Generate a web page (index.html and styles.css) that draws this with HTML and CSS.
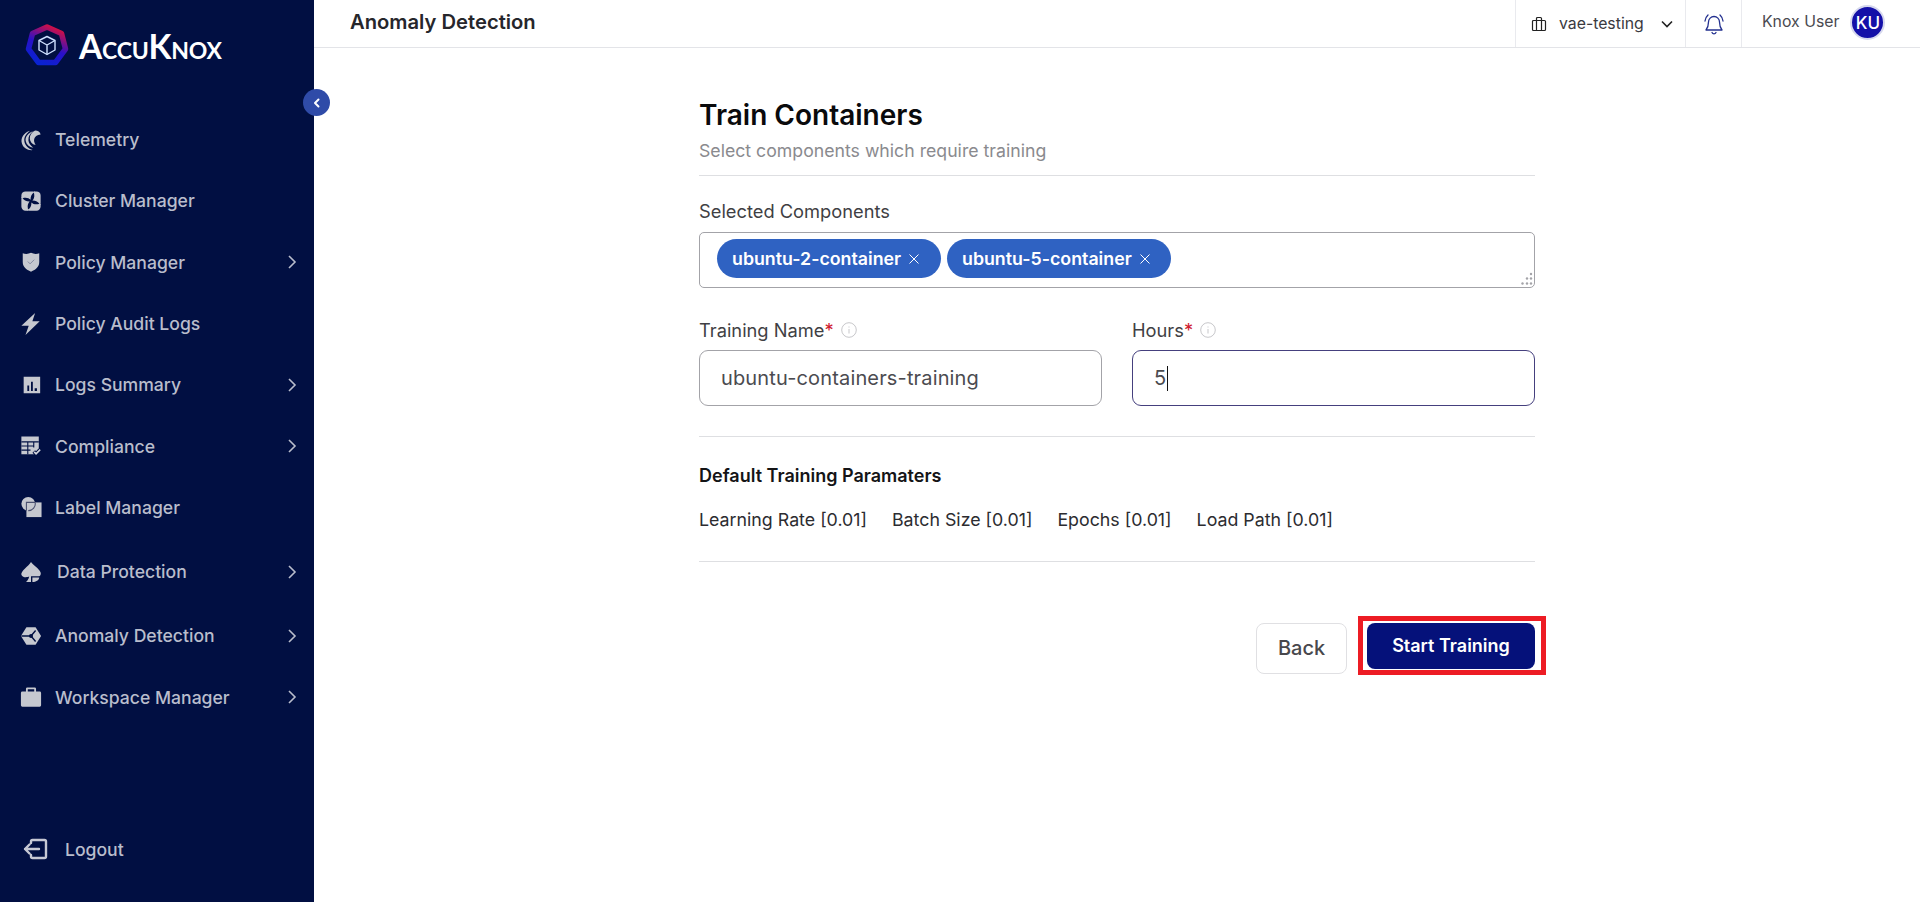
FILE: index.html
```html
<!DOCTYPE html>
<html lang="en">
<head>
  <meta charset="UTF-8">
  <meta name="viewport" content="width=device-width, initial-scale=1.0">
  <title>Anomaly Detection</title>
  <link rel="stylesheet" href="styles.css">
</head>
<body>

  <aside class="sidebar">
    <div class="brand">
      <svg class="brand-mark" viewBox="0 0 48 48" width="48" height="48">
        <defs>
          <linearGradient id="ring" x1="0.75" y1="0" x2="0.3" y2="1">
            <stop offset="0" stop-color="#d8103f"/>
            <stop offset="0.55" stop-color="#2a10c8"/>
            <stop offset="1" stop-color="#0a22d0"/>
          </linearGradient>
        </defs>
        <polygon points="24,5 38.5,11.5 42.5,27 32.5,40.5 15.5,40.5 5.5,27 9.5,11.5" fill="none" stroke="url(#ring)" stroke-width="5.5" stroke-linejoin="round"/>
        <g fill="none" stroke="#cfe0ff" stroke-width="1.4" stroke-linejoin="round">
          <path d="M24 14.5l8 4v9.500l-8 4.500-8-4.500V18.500z"/>
          <path d="M16 18.500l8 4.500 8-4.500M24 23v9.500"/>
        </g>
      </svg>
      <span class="brand-name">AccuKnox</span>
    </div>

    <button class="collapse" type="button">
      <svg viewBox="0 0 12 12" width="12" height="12"><path d="M7.500 2.500L4 6l3.500 3.500" fill="none" stroke="#fff" stroke-width="2" stroke-linecap="round" stroke-linejoin="round"/></svg>
    </button>

    <nav class="nav">
      <a class="nav-item">
        <svg class="nav-icon" viewBox="0 0 24 24">
          <path d="M11 2C4 4 .5 10 2 15.500 3.500 20.500 8 23.500 14 23c-5-2-8.500-5-9.200-9.500C4 9 7 5 11 2z"/>
          <path d="M14 2.500C9 4.500 5.500 8.500 6.200 13c.8 4 3.800 6.500 8.300 7.500-3-2.500-5-5-5.300-8C8.800 8.500 11 5 14 2.500z"/>
          <path d="M22.500 6c-.5-3-3-4.500-6-4.500-4 2-6 5.500-5.800 9 .3 3 2.300 6 6.300 7-1.500-2.500-2-4.500-1.500-6.500.5-2.500 3-4.500 7-5z"/>
        </svg>
        <span>Telemetry</span>
      </a>
      <a class="nav-item">
        <svg class="nav-icon" viewBox="0 0 24 24">
          <path d="M1.500 8V6A4.500 4.500 0 0 1 6 1.500h8.500c1.200 0 1.500 1 .5 1.500-2 1-3.500 3.500-3.500 7.500-1.500-1.500-4-2.500-7-2-1.500.3-3.500.5-3.500-.5z"/>
          <path d="M1.500 8V6A4.500 4.500 0 0 1 6 1.500h8.500c1.200 0 1.500 1 .5 1.500-2 1-3.500 3.500-3.500 7.500-1.500-1.500-4-2.500-7-2-1.500.3-3.500.5-3.500-.5z" transform="rotate(90 12 12)"/>
          <path d="M1.500 8V6A4.500 4.500 0 0 1 6 1.500h8.500c1.200 0 1.500 1 .5 1.500-2 1-3.500 3.500-3.500 7.500-1.500-1.500-4-2.500-7-2-1.500.3-3.500.5-3.500-.5z" transform="rotate(180 12 12)"/>
          <path d="M1.500 8V6A4.500 4.500 0 0 1 6 1.500h8.500c1.200 0 1.500 1 .5 1.500-2 1-3.500 3.500-3.500 7.500-1.500-1.500-4-2.500-7-2-1.500.3-3.500.5-3.500-.5z" transform="rotate(270 12 12)"/>
        </svg>
        <span>Cluster Manager</span>
      </a>
      <a class="nav-item">
        <svg class="nav-icon" viewBox="0 0 24 24"><path d="M3 2.500c2.800 1 6 1 9-.5 3 1.500 6.200 1.500 9 .5V12c0 5-3.500 8.500-9 10.500C6.500 20.500 3 17 3 12z"/><path d="M8.500 11.500l2.500 2.500 4.500-4.500" fill="none" stroke="#7f849c" stroke-width="1"/></svg>
        <span>Policy Manager</span>
        <svg class="nav-arrow" viewBox="0 0 10 16"><path d="M2 2l6 6-6 6"/></svg>
      </a>
      <a class="nav-item">
        <svg class="nav-icon" viewBox="0 0 24 24"><path d="M16.500 0L1.500 14h8L6 24 21.500 9h-8z"/></svg>
        <span>Policy Audit Logs</span>
      </a>
      <a class="nav-item">
        <svg class="nav-icon" viewBox="0 0 24 24"><path fill-rule="evenodd" d="M4 3h18v18H4zM8 12.500v6h2v-6zM12 8.500v10h2v-10zM16 15.500v3h2.500v-3z"/></svg>
        <span>Logs Summary</span>
        <svg class="nav-arrow" viewBox="0 0 10 16"><path d="M2 2l6 6-6 6"/></svg>
      </a>
      <a class="nav-item">
        <svg class="nav-icon" viewBox="0 0 24 24">
          <path d="M1.500 1.500h19v13l-5 6.500h-14z"/>
          <path d="M1.500 7.500h19M1.500 12h14M1.500 16.500h10M8.500 7.500V21M15 7.500v6" fill="none" stroke="#010f42" stroke-width="1.200"/>
          <path d="M15 18l2.500 2.500 5-5" fill="none" stroke="#010f42" stroke-width="4"/>
          <path d="M15.500 18.500l2 2 4.500-4.500" fill="none" stroke="#d4d6de" stroke-width="1.800"/>
        </svg>
        <span>Compliance</span>
        <svg class="nav-arrow" viewBox="0 0 10 16"><path d="M2 2l6 6-6 6"/></svg>
      </a>
      <a class="nav-item">
        <svg class="nav-icon" viewBox="0 0 24 24">
          <circle cx="9" cy="8.500" r="7.500"/>
          <rect x="7" y="7" width="16.500" height="16"/>
          <path d="M7 16V7h9.500M16.500 7a7.500 7.500 0 0 1-7.500 9" fill="none" stroke="#4b5170" stroke-width="1.200"/>
        </svg>
        <span>Label Manager</span>
      </a>
      <a class="nav-item nav-item-tall">
        <svg class="nav-icon nav-icon-data" viewBox="0 0 24 24">
          <path d="M12 1c2.500 4 9 7 10.500 11.500.6 2-.2 3.500-1.500 4H12v6.500H6.500c1.800-1.500 3-3.500 3.500-6C8 18 3 18.500 1.500 15 .5 11 9 6 12 1z"/>
          <path d="M13.500 18H21c-.5 3-3.500 5-7.500 5z"/>
        </svg>
        <span>Data Protection</span>
        <svg class="nav-arrow" viewBox="0 0 10 16"><path d="M2 2l6 6-6 6"/></svg>
      </a>
      <a class="nav-item">
        <svg class="nav-icon" viewBox="0 0 24 24"><path d="M7 2.500h10L23 12l-6 9.500H7L1 12z"/><path d="M1.500 12h10.500l5-6M12 12l5 6" fill="none" stroke="#010f42" stroke-width="1.500"/><circle cx="12" cy="12" r="2.200" fill="#010f42"/></svg>
        <span>Anomaly Detection</span>
        <svg class="nav-arrow" viewBox="0 0 10 16"><path d="M2 2l6 6-6 6"/></svg>
      </a>
      <a class="nav-item">
        <svg class="nav-icon" viewBox="0 0 24 24"><path fill-rule="evenodd" d="M8 1.500h8a1.500 1.500 0 0 1 1.500 1.500v3H21.500A1.500 1.500 0 0 1 23 7.500V21a1.500 1.500 0 0 1-1.500 1.500h-19A1.500 1.500 0 0 1 1 21V7.500A1.500 1.500 0 0 1 2.500 6h4V3A1.500 1.500 0 0 1 8 1.500zM8.500 3.500V6h7V3.500z"/></svg>
        <span>Workspace Manager</span>
        <svg class="nav-arrow" viewBox="0 0 10 16"><path d="M2 2l6 6-6 6"/></svg>
      </a>
    </nav>

    <a class="logout">
      <svg class="logout-icon" viewBox="0 0 26 22"><path d="M9 5V3.500A1.500 1.500 0 0 1 10.500 2h12A1.500 1.500 0 0 1 24 3.500v15a1.500 1.500 0 0 1-1.500 1.500h-12A1.500 1.500 0 0 1 9 18.500V17M17 11H3M7.500 6.500L3 11l4.500 4.500"/></svg>
      <span>Logout</span>
    </a>
  </aside>

  <div class="main">
    <header class="topbar">
      <h1 class="page-title">Anomaly Detection</h1>
      <div class="top-cell top-workspace">
        <svg class="top-icon" viewBox="0 0 16 16" width="16" height="16"><path d="M2.500 4.500h11a1 1 0 0 1 1 1v8a1 1 0 0 1-1 1h-11a1 1 0 0 1-1-1v-8a1 1 0 0 1 1-1zM5.500 4.500v-2a1 1 0 0 1 1-1h3a1 1 0 0 1 1 1v2M5.500 4.500v10M10.500 4.500v10"/></svg>
        <span class="workspace-name">vae-testing</span>
        <svg class="top-icon top-caret" viewBox="0 0 14 14" width="14" height="14"><path d="M2 4.500l5 5 5-5"/></svg>
      </div>
      <div class="top-cell top-bell">
        <svg class="bell" viewBox="0 0 24 24" width="24" height="24"><path d="M12 4.500a5.500 5.500 0 0 0-5.500 5.500c0 4-1 6-2.500 8h16c-1.500-2-2.500-4-2.500-8A5.500 5.500 0 0 0 12 4.500zM10 20.500a2.200 2.200 0 0 0 4 0M3 9c.3-2.500 1.300-4.500 3-6M21 9c-.3-2.500-1.300-4.500-3-6"/></svg>
      </div>
      <div class="top-cell top-user">
        <span class="user-name">Knox User</span>
        <span class="avatar">KU</span>
      </div>
    </header>

    <main class="content">
      <h2 class="form-title">Train Containers</h2>
      <p class="form-sub">Select components which require training</p>
      <hr class="rule rule-head">

      <label class="field-label field-label-first">Selected Components</label>
      <div class="tag-box">
        <span class="chip">ubuntu-2-container
          <svg class="chip-x" viewBox="0 0 12 12" width="12" height="12"><path d="M1.500 1.500l9 9M10.500 1.500l-9 9"/></svg>
        </span>
        <span class="chip">ubuntu-5-container
          <svg class="chip-x" viewBox="0 0 12 12" width="12" height="12"><path d="M1.500 1.500l9 9M10.500 1.500l-9 9"/></svg>
        </span>
        <svg class="grip" viewBox="0 0 14 14" width="14" height="14">
          <circle cx="12" cy="2" r="1.200"/><circle cx="8" cy="6.500" r="1.200"/><circle cx="12" cy="6.500" r="1.200"/><circle cx="3.500" cy="11.500" r="1.200"/><circle cx="8" cy="11.500" r="1.200"/><circle cx="12" cy="11.500" r="1.200"/>
        </svg>
      </div>

      <div class="field-row">
        <div class="field">
          <label class="field-label">Training Name<em>*</em>
            <svg class="info" viewBox="0 0 16 16" width="16" height="16"><circle cx="8" cy="8" r="7.300"/><path d="M8 7v4.500M8 4.500v1"/></svg>
          </label>
          <div class="text-input">ubuntu-containers-training</div>
        </div>
        <div class="field">
          <label class="field-label">Hours<em>*</em>
            <svg class="info" viewBox="0 0 16 16" width="16" height="16"><circle cx="8" cy="8" r="7.300"/><path d="M8 7v4.500M8 4.500v1"/></svg>
          </label>
          <div class="text-input text-input-focus">5<span class="caret"></span></div>
        </div>
      </div>
      <hr class="rule rule-fields">

      <h3 class="param-title">Default Training Paramaters</h3>
      <ul class="params">
        <li>Learning Rate [0.01]</li>
        <li>Batch Size [0.01]</li>
        <li>Epochs [0.01]</li>
        <li>Load Path [0.01]</li>
      </ul>
      <hr class="rule rule-params">

      <div class="actions">
        <button class="btn btn-back" type="button">Back</button>
        <button class="btn btn-start" type="button">Start Training</button>
      </div>
    </main>
  </div>

</body>
</html>
```

FILE: styles.css
```css
* {
  box-sizing: border-box;
}

body {
  margin: 0;
  height: 100vh;
  display: flex;
  overflow: hidden;
  background: #fff;
  font-family: Inter, "Liberation Sans", sans-serif;
  color: #3a3a3f;
}

/* sidebar */
.sidebar {
  position: relative;
  width: 314px;
  flex-shrink: 0;
  display: flex;
  flex-direction: column;
  background: #010f42;
  color: #b9bdcc;
}

.brand {
  height: 109px;
  display: flex;
  align-items: flex-start;
  padding: 22px 0 0 23px;
}

.brand-name {
  margin: 5px 0 0 8px;
  font-family: Lato, sans-serif;
  font-size: 33.4px;
  line-height: 38px;
  font-weight: 700;
  font-variant: small-caps;
  letter-spacing: -0.2px;
  color: #fff;
}

.collapse {
  position: absolute;
  top: 89px;
  left: 303px;
  width: 27px;
  height: 27px;
  padding: 0;
  border: none;
  border-radius: 50%;
  background: #2f4ba8;
  display: flex;
  align-items: center;
  justify-content: center;
}

.nav {
  display: flex;
  flex-direction: column;
}

.nav-item {
  height: 61.3px;
  display: flex;
  align-items: center;
  padding: 0 17px 0 20px;
  font-size: 17.6px;
  font-weight: 500;
}

.nav-item-tall {
  height: 67px;
}

.nav-icon {
  width: 22px;
  height: 22px;
  margin-right: 13px;
  flex-shrink: 0;
  fill: #c6c8cf;
}

.nav-icon-data {
  margin-right: 15px;
}

.nav-arrow {
  width: 10px;
  height: 16px;
  margin-left: auto;
  fill: none;
  stroke: #b9bdcc;
  stroke-width: 1.6;
}

.logout {
  margin-top: auto;
  margin-bottom: 42px;
  display: flex;
  align-items: center;
  padding-left: 22px;
  font-size: 17.6px;
  font-weight: 500;
}

.logout-icon {
  width: 26px;
  height: 22px;
  margin-right: 17px;
  fill: none;
  stroke: #c6c8d4;
  stroke-width: 2.4;
  stroke-linecap: round;
  stroke-linejoin: round;
}

/* top bar */
.main {
  flex: 1;
  min-width: 0;
}

.topbar {
  height: 48px;
  display: flex;
  align-items: stretch;
  border-bottom: 1px solid #e3e4e8;
}

.page-title {
  margin: 0 auto 0 36px;
  font-size: 20.2px;
  line-height: 44px;
  font-weight: 600;
  color: #26262b;
}

.top-cell {
  display: flex;
  align-items: center;
  border-left: 1px solid #e9eaee;
}

.top-workspace {
  width: 170px;
  padding-left: 15px;
}

.top-icon {
  fill: none;
  stroke: #222;
  stroke-width: 1.200;
}

.top-caret {
  margin-left: 16px;
  stroke-width: 1.600;
}

.workspace-name {
  margin-left: 12px;
  font-size: 15.8px;
  color: #3a3a3f;
}

.top-bell {
  width: 56px;
  justify-content: center;
}

.bell {
  fill: none;
  stroke: #23308f;
  stroke-width: 1.300;
  stroke-linejoin: round;
  stroke-linecap: round;
}

.top-user {
  width: 179px;
  padding-left: 20px;
  padding-bottom: 2px;
}

.user-name {
  font-size: 15.8px;
  color: #4a4a50;
  margin-bottom: 3px;
}

.avatar {
  width: 35px;
  height: 35px;
  margin-left: 11px;
  border: 2px solid #d6d8ee;
  border-radius: 50%;
  background: #1410a8;
  color: #fff;
  font-size: 17px;
  font-weight: 500;
  display: flex;
  align-items: center;
  justify-content: center;
}

/* form */
.content {
  width: 836px;
  margin-left: 385px;
  padding-top: 48px;
}

.form-title {
  margin: 0;
  font-size: 28px;
  line-height: 38px;
  font-weight: 600;
  color: #0a0a0c;
}

.form-sub {
  margin: 5px 0 0;
  font-size: 17.7px;
  line-height: 24px;
  color: #8a8a8e;
}

.rule {
  margin: 0;
  border: none;
  border-top: 1px solid #dedfe2;
}

.rule-head {
  margin-top: 12px;
}

.rule-fields {
  margin-top: 30px;
}

.rule-params {
  margin-top: 30px;
}

.field-label {
  display: flex;
  align-items: center;
  font-size: 18.3px;
  line-height: 22px;
  color: #3f3f44;
}

.field-label em {
  font-style: normal;
  color: #d0202f;
}

.field-label-first {
  margin-top: 24px;
}

.tag-box {
  position: relative;
  height: 56px;
  margin-top: 10px;
  padding: 6px 17px;
  display: flex;
  gap: 6px;
  border: 1px solid #a3a3a8;
  border-radius: 5px;
}

.chip {
  width: 224px;
  height: 39px;
  padding-left: 15px;
  display: flex;
  align-items: center;
  gap: 7px;
  border-radius: 20px;
  background: #2f62c2;
  color: #fff;
  font-size: 17.8px;
  font-weight: 600;
}

.chip-x {
  fill: none;
  stroke: #fff;
  stroke-width: 1;
}

.grip {
  position: absolute;
  right: 1px;
  bottom: 1px;
  fill: #a3a3a8;
}

.field-row {
  display: grid;
  grid-template-columns: 403px 403px;
  justify-content: space-between;
  margin-top: 31px;
}

.info {
  margin-left: 7px;
  fill: none;
  stroke: #b9b9bd;
  stroke-width: 0.800;
}

.text-input {
  height: 56px;
  margin-top: 9px;
  padding: 0 21px;
  display: flex;
  align-items: center;
  border: 1px solid #a3a3a8;
  border-radius: 9px;
  font-size: 20px;
  letter-spacing: 0.150px;
  color: #4b4b50;
}

.text-input-focus {
  border-color: #45407e;
}

.caret {
  width: 1px;
  height: 25px;
  margin-left: 1px;
  background: #111;
}

.param-title {
  margin: 28px 0 0;
  font-size: 18px;
  line-height: 22px;
  font-weight: 600;
  color: #141416;
}

.params {
  list-style: none;
  margin: 22px 0 0;
  padding: 0;
  display: flex;
  gap: 25px;
  font-size: 17.8px;
  line-height: 22px;
  color: #2c2c30;
}

.actions {
  display: flex;
  justify-content: flex-end;
  align-items: flex-start;
  gap: 20px;
  margin-top: 61px;
}

.btn {
  border-radius: 8px;
  font-family: inherit;
  font-size: 18px;
  font-weight: 600;
  padding-bottom: 3px;
}

.btn-back {
  width: 91px;
  height: 51px;
  border: 1px solid #e0e0e3;
  background: #fff;
  color: #48484c;
  font-size: 20px;
  font-weight: 500;
}

.btn-start {
  position: relative;
  width: 168px;
  height: 46px;
  border: none;
  background: #05117a;
  color: #fff;
}

/* red highlight drawn on the screenshot */
.btn-start::after {
  content: "";
  position: absolute;
  inset: -7px -11px -6px -9px;
  border: 5px solid #ed1c24;
}
```
